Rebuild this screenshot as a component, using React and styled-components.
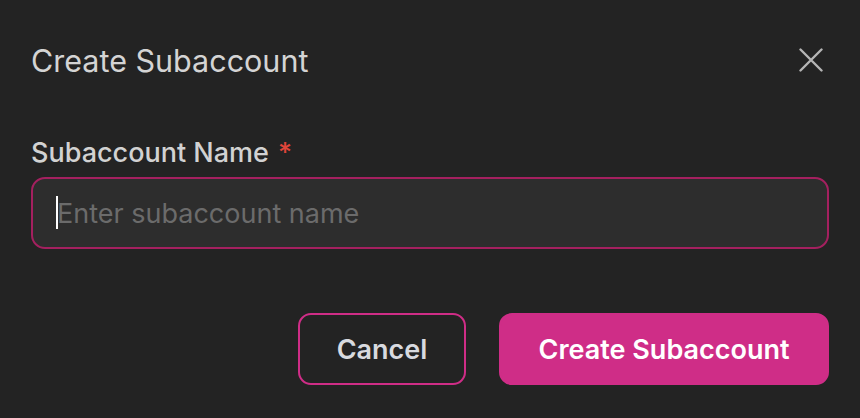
import React from "react";
import styled, { createGlobalStyle } from "styled-components";

const Global = createGlobalStyle`
  html, body { margin: 0; padding: 0; background: #232323; }
  body { font-family: Inter, "Noto Sans", sans-serif; }
  * { box-sizing: border-box; }
`;

const Dialog = styled.div`
  width: 860px;
  height: 418px;
  background: #232323;
  padding: 0 31px;
  display: flex;
  flex-direction: column;
`;

const Header = styled.div`
  display: flex;
  align-items: center;
  justify-content: space-between;
  height: 120px;
`;

const Title = styled.h2`
  margin: 0;
  font-family: Inter, sans-serif;
  font-weight: 400;
  font-size: 30.5px;
  color: #d4d4d4;
`;

const CloseButton = styled.button`
  background: none;
  border: none;
  padding: 0;
  width: 24px;
  height: 24px;
  margin-right: 6px;
  display: flex;
  color: #b5b5b5;
  cursor: pointer;
`;

const Field = styled.div`
  display: flex;
  flex-direction: column;
  gap: 8px;
  margin-top: 16px;
`;

const Label = styled.label`
  font-family: Inter, sans-serif;
  font-weight: 500;
  font-size: 27px;
  line-height: 33px;
  color: #d2d2d2;
`;

const Required = styled.span`
  color: #e0453a;
  margin-left: 9px;
`;

const InputWrap = styled.div`
  position: relative;
`;

const Input = styled.input`
  display: block;
  height: 72px;
  width: 100%;
  background: #2d2d2d;
  border: 2px solid #a4205f;
  border-radius: 14px;
  padding: 0 24px;
  font-family: Inter, sans-serif;
  font-size: 27px;
  color: #e8e8e8;
  caret-color: #ffffff;
  outline: none;
  &::placeholder { color: #6b6b6b; }
`;

const Caret = styled.span`
  position: absolute;
  left: 25px;
  top: 19px;
  width: 2px;
  height: 33px;
  background: #ffffff;
  pointer-events: none;
`;

const Footer = styled.div`
  display: flex;
  justify-content: flex-end;
  gap: 33px;
  margin-top: 64px;
`;

const Button = styled.button`
  height: 72px;
  border-radius: 13px;
  font-family: Inter, sans-serif;
  font-weight: 600;
  font-size: 27px;
  cursor: pointer;
  border: 2px solid #cf2d87;
  background: ${p => (p.$primary ? "#cf2d87" : "transparent")};
  color: ${p => (p.$primary ? "#ffffff" : "#d8dadf")};
  width: ${p => p.$width}px;
`;

export default function App() {
  return (
    <>
      <Global />
      <Dialog>
        <Header>
          <Title>Create Subaccount</Title>
          <CloseButton aria-label="Close">
            <svg width="24" height="24" viewBox="0 0 24 24" fill="none" stroke="currentColor" strokeWidth="2.4" strokeLinecap="round">
              <path d="M1.5 1.5L22.5 22.5M22.5 1.5L1.5 22.5" />
            </svg>
          </CloseButton>
        </Header>
        <Field>
          <Label>
            Subaccount Name<Required>*</Required>
          </Label>
          <InputWrap>
            <Input placeholder="Enter subaccount name" />
            <Caret />
          </InputWrap>
        </Field>
        <Footer>
          <Button $width={168}>Cancel</Button>
          <Button $primary $width={330}>Create Subaccount</Button>
        </Footer>
      </Dialog>
    </>
  );
}
